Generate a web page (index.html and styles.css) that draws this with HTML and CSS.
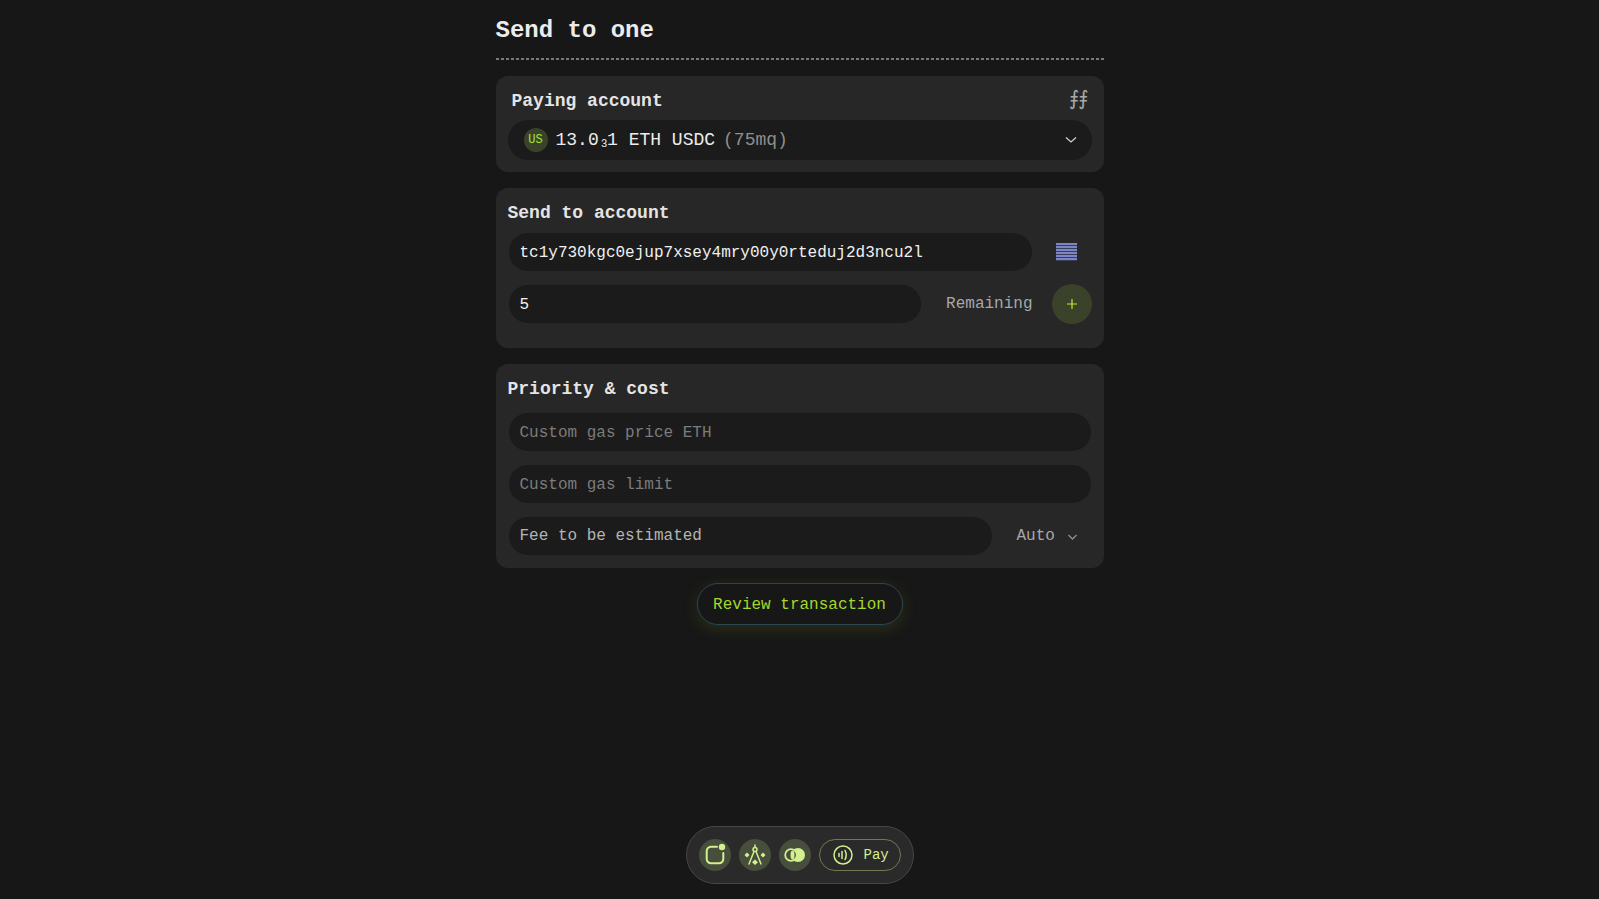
FILE: index.html
```html
<!DOCTYPE html>
<html lang="en">
<head>
  <meta charset="UTF-8" />
  <meta name="viewport" content="width=device-width, initial-scale=1" />
  <title>Send to one</title>
  <link rel="stylesheet" href="styles.css">
</head>
<body>

  <main class="page">
    <h1 class="page-title">Send to one</h1>

    <!-- Paying account -->
    <section class="card card-paying">
      <div class="card-head">
        <h2>Paying account</h2>
        <span class="fn-mark">⨎⨎</span>
      </div>
      <div class="pill pill-select">
        <span class="token-badge">US</span>
        <span class="balance">13.0<span class="sub-digit">₃</span>1 ETH USDC</span>
        <span class="balance-note">(75mq)</span>
        <svg class="chevron" width="14" height="8" viewBox="0 0 14 8"><path d="M2 1.5 7 6l5-4.5" /></svg>
      </div>
    </section>

    <!-- Send to account -->
    <section class="card card-send">
      <h2>Send to account</h2>
      <div class="row">
        <div class="pill pill-input grow value">tc1y730kgc0ejup7xsey4mry00y0rteduj2d3ncu2l</div>
        <span class="scan-icon"></span>
      </div>
      <div class="row">
        <div class="pill pill-input grow value">5</div>
        <span class="remaining">Remaining</span>
        <button class="add-btn">
          <svg width="12" height="12" viewBox="0 0 12 12"><path d="M6 1v10M1 6h10" /></svg>
        </button>
      </div>
    </section>

    <!-- Priority & cost -->
    <section class="card card-cost">
      <h2>Priority &amp; cost</h2>
      <div class="pill pill-input placeholder">Custom gas price ETH</div>
      <div class="pill pill-input placeholder">Custom gas limit</div>
      <div class="row">
        <div class="pill pill-input grow muted">Fee to be estimated</div>
        <span class="auto">Auto
          <svg class="chevron small" width="9" height="6" viewBox="0 0 9 6"><path d="M.5 1 4.500 5 8.500 1" /></svg>
        </span>
      </div>
    </section>

    <button class="review-btn">Review transaction</button>
  </main>

  <!-- Bottom dock -->
  <nav class="dock">
    <span class="dock-item">
      <svg width="24" height="24" viewBox="0 0 24 24"><path class="line" d="M14 3.700H8A4.300 4.300 0 0 0 3.700 8v8A4.300 4.300 0 0 0 8 20.300h8a4.300 4.300 0 0 0 4.300-4.300v-6" /><circle class="solid" cx="19" cy="4" r="3.200" /></svg>
    </span>
    <span class="dock-item">
      <svg width="24" height="24" viewBox="0 0 24 24"><circle class="line thin" cx="12" cy="6.500" r="2" /><path class="line thin" d="M12 2v2.500M11 8.500 6 21M13 8.500 18 21" /><path class="solid" d="m4 9.500 2.500 2.500L4 14.500 1.500 12zM20 9.500l2.500 2.500-2.500 2.500-2.500-2.500zM12 16.500l3 2.800-3 2.700-3-2.700z" /></svg>
    </span>
    <span class="dock-item">
      <svg width="24" height="24" viewBox="0 0 24 24"><circle class="solid" cx="15" cy="12" r="7" /><circle class="ring" cx="8" cy="12" r="5.800" /><ellipse class="solid" cx="9.500" cy="12" rx="2" ry="4.500" /></svg>
    </span>
    <span class="dock-pay">
      <svg width="20" height="20" viewBox="0 0 20 20"><circle class="line thin" cx="10" cy="10" r="9" /><path class="line thin" d="M6 8.500v3M9 6.500v7M12 5.500c1.500 2.800 1.500 6.200 0 9" /></svg>
      <span>Pay</span>
    </span>
  </nav>

</body>
</html>
```

FILE: styles.css
```css
* {
  box-sizing: border-box;
}

body {
  margin: 0;
  height: 899px;
  display: flex;
  flex-direction: column;
  align-items: center;
  background-color: #171717;
  font-family: 'Liberation Mono', monospace;
  font-size: 16px;
  color: #e6e6e6;
}

.page {
  width: 608px;
  display: flex;
  flex-direction: column;
  align-items: stretch;
}

.page-title {
  margin: 0 0 16px;
  height: 60px;
  padding-top: 16px;
  font-size: 24px;
  line-height: 30px;
  font-weight: 700;
  color: #ececec;
  background: repeating-linear-gradient(to right, #7a7a7a 0, #7a7a7a 3px, transparent 3px, transparent 5px) bottom / 100% 2px no-repeat;
}

h2 {
  margin: 0;
  padding-top: 1px;
  font-size: 18px;
  line-height: 24px;
  font-weight: 700;
  color: #e4e4e4;
}

.card {
  background-color: #272727;
  border-radius: 12px;
  padding: 12px;
  margin-bottom: 16px;
  display: flex;
  flex-direction: column;
}

.card-paying {
  height: 96px;
}

.card-send {
  height: 160px;
  gap: 13px;
}

.card-cost {
  height: 204px;
  gap: 14px;
}

.card-send h2 {
  margin-bottom: -5px;
}

.card-cost h2 {
  margin-bottom: -2px;
}

.card-head {
  display: flex;
  justify-content: space-between;
  align-items: center;
  height: 24px;
  padding: 0 4px;
  margin-bottom: 8px;
}

.fn-mark {
  font-family: 'DejaVu Sans', sans-serif;
  font-size: 20px;
  line-height: 24px;
  letter-spacing: -1px;
  padding-bottom: 4px;
  color: #a8a8a8;
}

.pill {
  display: flex;
  align-items: center;
  background-color: #1b1b1b;
  border-radius: 20px;
  margin-left: 1px;
}

.pill-input {
  height: 38px;
  padding: 1px 11px 0 11px;
}

.pill-select {
  height: 40px;
  margin-left: 0;
  padding: 0 14px 0 16px;
  font-size: 18px;
}

.grow {
  flex: 1;
}

.value {
  color: #f0f0f0;
}

.placeholder {
  margin-right: 1px;
  color: #7c7c7c;
}

.muted {
  padding-top: 0;
  color: #b4b4b4;
}

.row {
  display: flex;
  align-items: center;
}

.token-badge {
  width: 24px;
  height: 24px;
  border-radius: 50%;
  background-color: #3a4329;
  color: #a3e635;
  font-size: 12px;
  line-height: 24px;
  text-align: center;
  margin-right: 8px;
}

.balance {
  color: #ececec;
}

.sub-digit {
  letter-spacing: -2.5px;
}

.balance-note {
  margin-left: 8px;
  color: #8f8f8f;
}

.chevron {
  fill: none;
  stroke: #d0d0d0;
  stroke-width: 1.3;
}

.pill-select .chevron {
  margin-left: auto;
}

.chevron.small {
  stroke: #8f8f8f;
  margin-left: 3px;
}

.scan-icon {
  width: 21px;
  height: 18px;
  margin: 0 15px 0 24px;
  background: repeating-linear-gradient(to bottom, #7c86c4 0, #7c86c4 2px, #3a3d55 2px, #3a3d55 3px);
}

.remaining {
  margin: 0 19px 0 25px;
  color: #a8a8a8;
}

.add-btn {
  width: 40px;
  height: 40px;
  padding: 0;
  border: none;
  border-radius: 50%;
  background-color: #3a4329;
  display: flex;
  align-items: center;
  justify-content: center;
}

.add-btn path {
  fill: none;
  stroke: #b9ec30;
  stroke-width: 1.2;
}

.auto {
  width: 100px;
  padding-left: 25px;
  color: #a8a8a8;
  white-space: nowrap;
}

.review-btn {
  align-self: center;
  width: 206px;
  height: 42px;
  margin-top: -1px;
  padding: 1px 0 0;
  border: 1px solid #2b4552;
  border-radius: 21px;
  background-color: #171717;
  color: #a3d82e;
  font-family: inherit;
  font-size: 16px;
  box-shadow: 0 4px 16px rgba(120, 130, 30, 0.22);
}

/* Bottom dock */
.dock {
  margin-top: auto;
  margin-bottom: 15px;
  width: 228px;
  height: 58px;
  padding: 0 12px;
  display: flex;
  align-items: center;
  gap: 8px;
  background-color: #2a2a2a;
  border: 1px solid #464646;
  border-radius: 29px;
}

.dock-item {
  width: 32px;
  height: 32px;
  border-radius: 50%;
  background-color: #474e3c;
  display: flex;
  align-items: center;
  justify-content: center;
}

.dock-pay {
  width: 82px;
  height: 32px;
  border: 1px solid #6f7a52;
  border-radius: 16px;
  display: flex;
  align-items: center;
  gap: 11px;
  padding-left: 13px;
  color: #d3f08f;
  font-size: 14px;
}

.line {
  fill: none;
  stroke: #d3f08f;
  stroke-width: 2;
  stroke-linecap: round;
}

.line.thin {
  stroke-width: 1.5;
}

.solid {
  fill: #d3f08f;
}

.ring {
  fill: #474e3c;
  stroke: #d3f08f;
  stroke-width: 1.8;
}
```
